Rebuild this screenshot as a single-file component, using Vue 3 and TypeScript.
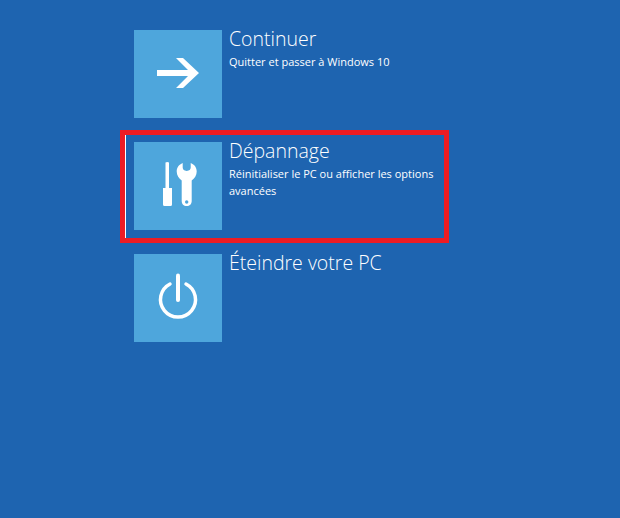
<script setup lang="ts">
interface Option {
  title: string
  desc: string
  icon: 'arrow' | 'tools' | 'power'
  selected: boolean
}
const options: Option[] = [
  { title: 'Continuer', desc: 'Quitter et passer à Windows 10', icon: 'arrow', selected: false },
  { title: 'Dépannage', desc: 'Réinitialiser le PC ou afficher les options avancées', icon: 'tools', selected: true },
  { title: 'Éteindre votre PC', desc: '', icon: 'power', selected: false },
]
</script>

<template>
  <main class="page">
    <div v-for="o in options" :key="o.title" class="option">
      <div class="tile">
        <svg width="88" height="88" viewBox="0 0 88 88" fill="#fff">
          <path v-if="o.icon === 'arrow'" d="M42 28H49L65 43 49 58H42L54 46H23V40H54Z" />
          <g v-else-if="o.icon === 'tools'">
            <path d="M31.500 20.500Q33.250 19.500 35 20.500V46H38V62.500Q38 64 36.500 64H30.500Q29 64 29 62.500V46H31.500Z" />
            <path fill-rule="evenodd" d="M48.700 21V25.500Q48.700 28.500 52.700 29 56.700 28.500 56.700 25.500V21C60.500 22.500 62.700 25.500 62.700 29.500 62.700 33.500 60.500 36.500 57.700 38.500V59C57.700 62 55.700 64 52.700 64S47.700 62 47.700 59V38.500C45 36.500 42.700 33.500 42.700 29.500 42.700 25.500 45 22.500 48.700 21ZM52.700 58.300A1.700 1.700 0 1 0 52.700 61.700 1.700 1.700 0 1 0 52.700 58.300Z" />
          </g>
          <g v-else fill="none" stroke="#fff">
            <path d="M36 30A17.500 17.500 0 1 0 52 30" stroke-width="3.500" stroke-linecap="round" />
            <path d="M44 21.500V46" stroke-width="4" stroke-linecap="round" />
          </g>
        </svg>
      </div>
      <div class="text">
        <div class="title">{{ o.title }}</div>
        <div v-if="o.desc" class="desc">{{ o.desc }}</div>
      </div>
      <div v-if="o.selected" class="highlight"></div>
    </div>
  </main>
</template>

<style>
html, body { margin: 0; background: #1e64b0; }
</style>

<style scoped>
.page {
  width: 620px;
  height: 518px;
  box-sizing: border-box;
  padding: 30px 0 0 134px;
  background: #1e64b0;
  display: flex;
  flex-direction: column;
  gap: 24px;
  color: #fff;
  font-family: "Open Sans", "Noto Sans", sans-serif;
  overflow: hidden;
}
.option {
  position: relative;
  display: flex;
  gap: 7px;
  height: 88px;
}
.tile {
  width: 88px;
  height: 88px;
  flex: none;
  background: #4ea6dc;
}
.tile svg { display: block; }
.text { width: 210px; }
.title {
  font-size: 19.5px;
  font-weight: 300;
  line-height: 18px;
}
.desc {
  margin-top: 5px;
  font-size: 11px;
  line-height: 17px;
}
.highlight {
  position: absolute;
  left: -14px;
  top: -12px;
  width: 329px;
  height: 113px;
  box-sizing: border-box;
  border: 5px solid #ed1c24;
}
.highlight::before {
  content: "";
  position: absolute;
  left: 0;
  top: 0;
  bottom: 0;
  width: 1px;
  background: #fff;
}
</style>
